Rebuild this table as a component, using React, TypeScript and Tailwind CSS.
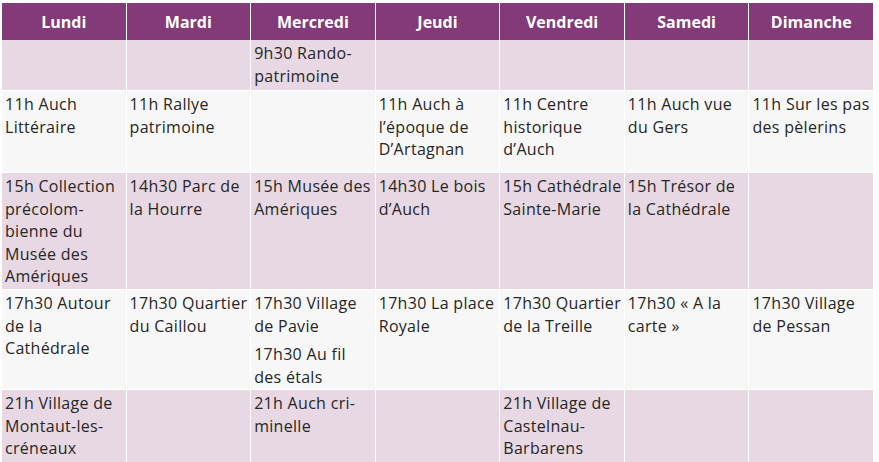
import React from "react";

type Cell = string[][];

const days = ["Lundi", "Mardi", "Mercredi", "Jeudi", "Vendredi", "Samedi", "Dimanche"];

const rows: { h: string; bg: string; cells: Cell[] }[] = [
  {
    h: "h-[50px]",
    bg: "bg-[#e7d8e3]",
    cells: [[], [], [["9h30 Rando-", "patrimoine"]], [], [], [], []],
  },
  {
    h: "h-[82px]",
    bg: "bg-[#f7f7f7]",
    cells: [
      [["11h Auch", "Littéraire"]],
      [["11h Rallye", "patrimoine"]],
      [],
      [["11h Auch à", "l’époque de", "D’Artagnan"]],
      [["11h Centre", "historique", "d’Auch"]],
      [["11h Auch vue", "du Gers"]],
      [["11h Sur les pas", "des pèlerins"]],
    ],
  },
  {
    h: "h-[117px]",
    bg: "bg-[#e7d8e3]",
    cells: [
      [["15h Collection", "précolom-", "bienne du", "Musée des", "Amériques"]],
      [["14h30 Parc de", "la Hourre"]],
      [["15h Musée des", "Amériques"]],
      [["14h30 Le bois", "d’Auch"]],
      [["15h Cathédrale", "Sainte-Marie"]],
      [["15h Trésor de", "la Cathédrale"]],
      [],
    ],
  },
  {
    h: "h-[100px]",
    bg: "bg-[#f7f7f7]",
    cells: [
      [["17h30 Autour", "de la", "Cathédrale"]],
      [["17h30 Quartier", "du Caillou"]],
      [
        ["17h30 Village", "de Pavie"],
        ["17h30 Au fil", "des étals"],
      ],
      [["17h30 La place", "Royale"]],
      [["17h30 Quartier", "de la Treille"]],
      [["17h30 « A la", "carte »"]],
      [["17h30 Village", "de Pessan"]],
    ],
  },
  {
    h: "h-[80px]",
    bg: "bg-[#e7d8e3]",
    cells: [
      [["21h Village de", "Montaut-les-", "créneaux"]],
      [],
      [["21h Auch cri-", "minelle"]],
      [],
      [["21h Village de", "Castelnau-", "Barbarens"]],
      [],
      [],
    ],
  },
];

export default function App() {
  return (
    <div
      className="w-[879px] h-[462px] overflow-hidden bg-white pt-[3px] pl-[2px]"
      style={{ fontFamily: '"Open Sans", "Liberation Sans", sans-serif' }}
    >
      <div className="w-[871px] flex flex-col">
        <div className="grid grid-cols-7 gap-x-px h-[37px]">
          {days.map((d) => (
            <div
              key={d}
              className="bg-[#833a78] text-white font-bold text-[16px] pt-px flex items-center justify-center"
            >
              {d}
            </div>
          ))}
        </div>
        {rows.map((r, i) => (
          <div key={i} className={`grid grid-cols-7 gap-x-px ${r.h} ${i > 0 ? "border-t border-white" : ""}`}>
            {r.cells.map((c, j) => (
              <div
                key={j}
                className={`${r.bg} pt-[2px] pl-[3px] text-[16px] tracking-[0.3px] leading-[22.5px] text-[#262626]`}
              >
                {c.map((p, k) => (
                  <div key={k} className={k > 0 ? "mt-[6px]" : ""}>
                    {p.map((l, m) => (
                      <div key={m} className="whitespace-nowrap">
                        {l}
                      </div>
                    ))}
                  </div>
                ))}
              </div>
            ))}
          </div>
        ))}
      </div>
    </div>
  );
}
